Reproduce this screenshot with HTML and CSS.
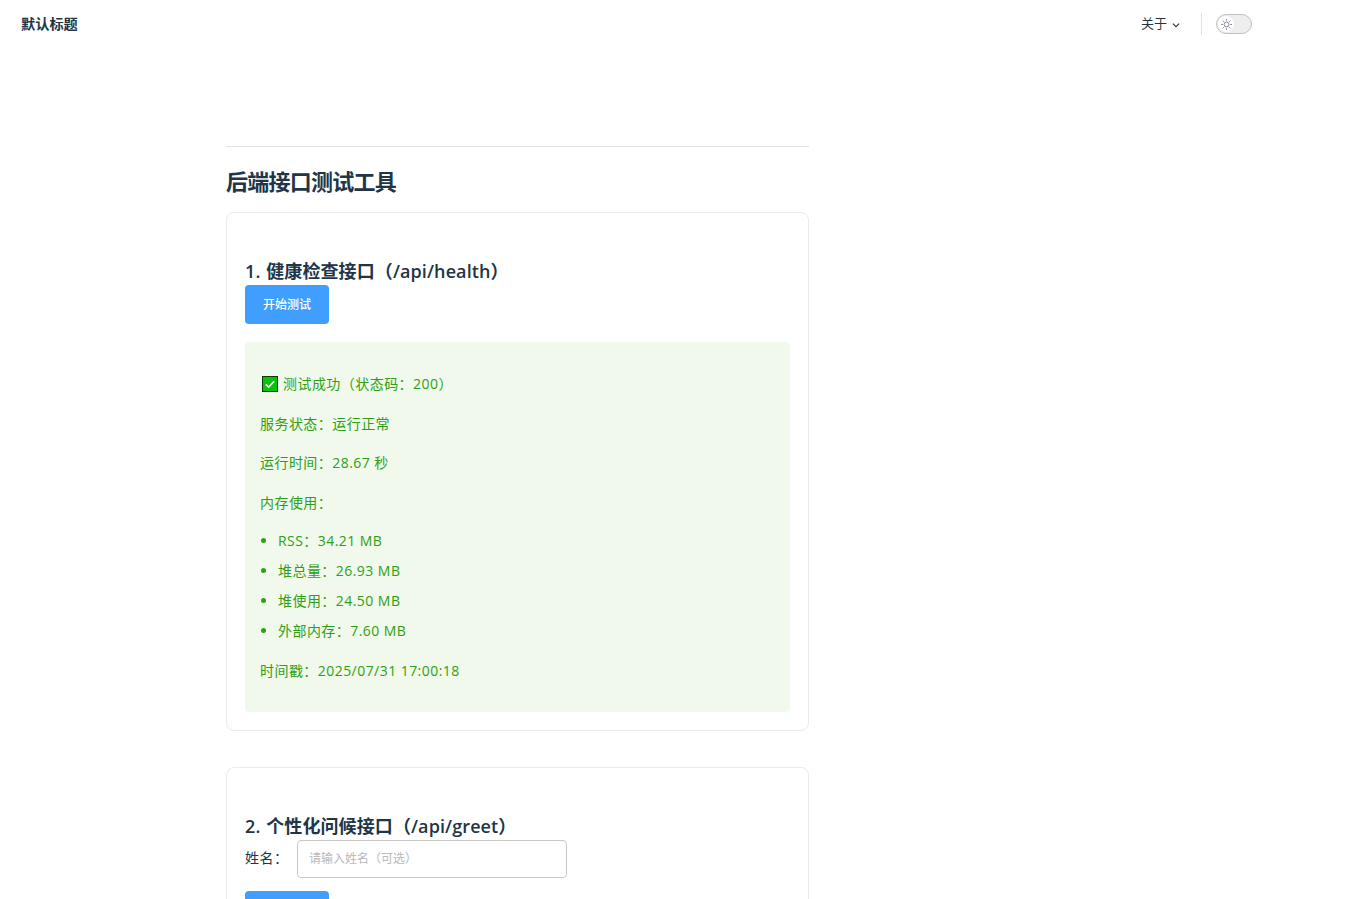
FILE: index.html
```html
<!DOCTYPE html>
<html lang="zh-CN">
<head>
<meta charset="utf-8">
<title>默认标题</title>
<link rel="stylesheet" href="styles.css">
</head>
<body>
<div class="page">
  <header class="nav">
    <div class="brand">默认标题</div>
    <div class="nav-right">
      <div class="menu"><span class="menu-text">关于</span>
        <svg class="chev" viewBox="0 0 24 24" width="10" height="10"><path d="M4.5 8.5l7.5 7.5 7.500-7.500" fill="none" stroke="currentColor" stroke-width="2.6"/></svg>
      </div>
      <div class="divider"></div>
      <div class="switch"><span class="knob">
        <svg viewBox="0 0 24 24" width="13" height="13"><circle cx="12" cy="12" r="4.500" fill="none" stroke="#6b7280" stroke-width="1.600"/><path d="M12 2v3M12 19v3M2 12h3M19 12h3M4.900 4.900L7 7M17 17l2.100 2.100M4.900 19.100L7 17M17 7l2.100-2.100" stroke="#6b7280" stroke-width="1.600" fill="none"/></svg>
      </span></div>
    </div>
  </header>
  <main class="content">
    <hr class="rule">
    <h1 class="title">后端接口测试工具</h1>
    <section class="card">
      <h3 class="card-title">1. 健康检查接口（/api/health）</h3>
      <button class="btn">开始测试</button>
      <div class="result">
        <p class="line first"><span class="check"><svg viewBox="0 0 16 16" width="16" height="16"><rect x="0.500" y="0.500" width="15" height="15" fill="#0bc20b" stroke="#0a3a0a"/><path d="M3.800 8.300l2.800 2.700L12.200 5.300" fill="none" stroke="#fff" stroke-width="1.600"/></svg></span>测试成功（状态码：200）</p>
        <p class="line">服务状态：运行正常</p>
        <p class="line">运行时间：28.67 秒</p>
        <p class="line">内存使用：</p>
        <ul class="list">
          <li>RSS：34.21 MB</li>
          <li>堆总量：26.93 MB</li>
          <li>堆使用：24.50 MB</li>
          <li>外部内存：7.60 MB</li>
        </ul>
        <p class="line last">时间戳：2025/07/31 17:00:18</p>
      </div>
    </section>
    <section class="card">
      <h3 class="card-title">2. 个性化问候接口（/api/greet）</h3>
      <div class="field">
        <label class="label">姓名：</label>
        <input class="input" placeholder="请输入姓名（可选）">
      </div>
      <button class="btn">开始测试</button>
    </section>
  </main>
</div>
</body>
</html>
```
FILE: styles.css
```css
* { box-sizing: border-box; }
html, body { margin: 0; padding: 0; background: #fff; }
body { font-family: "Open Sans", "Noto Sans CJK SC", sans-serif; color: #213547; }
.page { height: 899px; overflow: hidden; }
.nav { height: 48px; padding-left: 21px; padding-right: 96px; display: flex; align-items: center; justify-content: space-between; }
.brand { font-size: 14.2px; font-weight: 700; padding-bottom: 2px; }
.nav-right { display: flex; align-items: center; }
.menu { font-size: 13px; display: flex; align-items: center; gap: 4px; }
.menu-text { display: block; padding-bottom: 4px; }
.chev { display: block; margin-top: 1px; }
.divider { width: 1px; height: 22px; background: #e2e2e3; margin: 0 14px 0 20px; }
.switch { width: 36px; height: 20px; border: 1px solid #c2c2c4; border-radius: 10px; background: #eeeeee; padding: 1px; display: flex; }
.knob { width: 16px; height: 16px; border-radius: 50%; background: #fff; display: flex; align-items: center; justify-content: center; }
.content { width: 583px; margin-left: 226px; padding-top: 98px; }
.rule { border: 0; border-top: 1px solid #e2e2e3; margin: 0; }
.title { font-size: 22px; font-weight: 700; line-height: 30px; margin: 19px 0 16px; letter-spacing: -0.75px; }
.card { border: 1px solid #ebebeb; border-radius: 8px; padding: 45px 18px 18px; margin-bottom: 36px; }
.card-title { font-size: 18px; font-weight: 600; line-height: 27px; margin: 0; letter-spacing: 0.1px; word-spacing: 1px; }
.btn { display: block; width: 84px; height: 39px; border: 0; border-radius: 4px; background: #409eff; color: #fff; font: inherit; font-size: 12px; font-weight: 500; padding: 0 0 2px; }
.result { margin-top: 18px; height: 370px; background: #f0f9eb; border-radius: 4px; padding: 30px 15px 0; color: #2fa015; font-size: 14px; letter-spacing: 0.45px; }
.line { margin: 0 0 15.5px; line-height: 24px; height: 24px; }
.check { display: inline-block; vertical-align: -3px; margin: 0 5px 0 2px; height: 16px; }
.line.last { margin-top: 16px; }
.list { margin: -1.5px 0 0; padding-left: 18px; font-size: 14px; }
.list li { line-height: 24px; margin-bottom: 6.2px; }
.list li::marker { color: #2fa015; }
.field { display: flex; align-items: center; height: 38px; margin-bottom: 13px; }
.label { font-size: 14px; width: 52px; padding-bottom: 5px; letter-spacing: 0.45px; }
.input { width: 270px; height: 38px; border: 1px solid #c8c8c8; border-radius: 4px; padding: 0 11px 2px; font: inherit; font-size: 12px; outline: 0; }
.input::placeholder { color: #b8b8b8; }
```
